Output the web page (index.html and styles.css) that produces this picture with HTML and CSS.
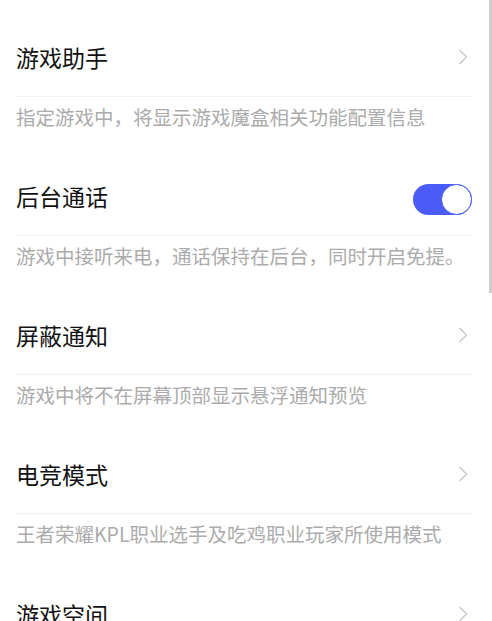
FILE: index.html
```html
<!DOCTYPE html>
<html>
<head>
    <meta charset="utf-8">
    <link rel="stylesheet" href="styles.css">
</head>
<body>
    <div class="scrollbar"></div>
    <div class="list">
        <div class="item">
            <div class="row">
                <span class="title">游戏助手</span>
                <svg class="arrow" width="10" height="16" viewBox="0 0 10 16"><polyline points="1.5,1 8.5,8 1.5,15" fill="none" stroke="#c9c9c9" stroke-width="1.4"/></svg>
            </div>
            <div class="desc">指定游戏中，将显示游戏魔盒相关功能配置信息</div>
        </div>
        <div class="item">
            <div class="row">
                <span class="title">后台通话</span>
                <div class="switch on"><div class="knob"></div></div>
            </div>
            <div class="desc">游戏中接听来电，通话保持在后台，同时开启免提。</div>
        </div>
        <div class="item">
            <div class="row">
                <span class="title">屏蔽通知</span>
                <svg class="arrow" width="10" height="16" viewBox="0 0 10 16"><polyline points="1.5,1 8.5,8 1.5,15" fill="none" stroke="#c9c9c9" stroke-width="1.4"/></svg>
            </div>
            <div class="desc">游戏中将不在屏幕顶部显示悬浮通知预览</div>
        </div>
        <div class="item">
            <div class="row">
                <span class="title">电竞模式</span>
                <svg class="arrow" width="10" height="16" viewBox="0 0 10 16"><polyline points="1.5,1 8.5,8 1.5,15" fill="none" stroke="#c9c9c9" stroke-width="1.4"/></svg>
            </div>
            <div class="desc">王者荣耀KPL职业选手及吃鸡职业玩家所使用模式</div>
        </div>
        <div class="item">
            <div class="row">
                <span class="title">游戏空间</span>
                <svg class="arrow" width="10" height="16" viewBox="0 0 10 16"><polyline points="1.5,1 8.5,8 1.5,15" fill="none" stroke="#c9c9c9" stroke-width="1.4"/></svg>
            </div>
        </div>
    </div>
</body>
</html>
```

FILE: styles.css
```css
html, body {
    margin: 0;
    height: 100%;
    overflow: hidden;
}
body {
    background-color: #fff;
    font-family: "Noto Sans CJK SC", "Noto Sans", sans-serif;
}
.scrollbar {
    position: fixed;
    top: 0;
    right: 0;
    width: 3px;
    height: 293px;
    background-color: #cdcdcd;
}
.list {
    padding: 24px 20px 0 16px;
}
.row {
    height: 73px;
    box-sizing: border-box;
    padding-bottom: 6px;
    display: flex;
    align-items: center;
    justify-content: space-between;
    border-bottom: 1px solid #f1f1f1;
}
.item:last-child .row {
    border-bottom: none;
}
.title {
    font-size: 23px;
    color: #111;
}
.arrow {
    margin-right: 4px;
}
.desc {
    font-size: 19.5px;
    line-height: 40px;
    padding-bottom: 26px;
    color: #ababab;
    white-space: nowrap;
}
.switch {
    width: 59px;
    height: 31px;
    margin-top: 6px;
    border-radius: 16px;
    background-color: #ddd;
    display: flex;
    align-items: center;
    justify-content: flex-start;
    box-sizing: border-box;
}
.switch.on {
    background-color: #4a5cf5;
    justify-content: flex-end;
}
.knob {
    width: 31px;
    height: 31px;
    border-radius: 50%;
    background-color: #fff;
    border: 1.5px solid #4a5cf5;
    box-sizing: border-box;
}
```
